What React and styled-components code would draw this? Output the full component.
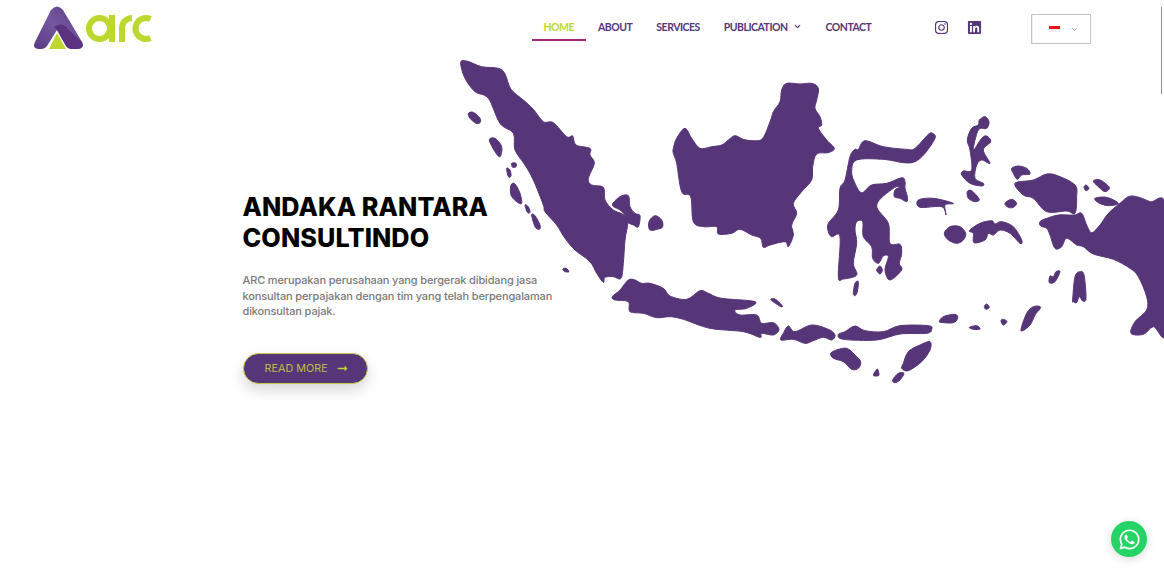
import React from "react";
import styled, { createGlobalStyle } from "styled-components";
import { FaInstagram, FaLinkedin, FaWhatsapp, FaLongArrowAltRight } from "react-icons/fa";
import { ChevronDown } from "lucide-react";

const PURPLE = "#563678";
const LIME = "#bdd72e";

// map outlines, traced from the reference at 3x
const WEST = [
  [[32,38],[50,33],[95,50],[145,55],[165,72],[183,118],[220,150],[250,178],[280,215],[310,218],[350,260],[368,258],[378,285],[420,295],[420,315],[433,340],[415,385],[425,405],[460,412],[465,450],[490,480],[522,495],[533,520],[525,570],[520,640],[513,685],[490,680],[465,682],[460,697],[440,670],[420,635],[375,600],[345,565],[320,525],[285,485],[280,465],[250,390],[225,345],[195,300],[190,250],[150,220],[115,145],[75,125],[45,85]],
  [[55,190],[70,187],[90,205],[90,218],[78,220],[60,205]],
  [[118,270],[135,265],[155,290],[150,320],[135,305]],
  [[185,340],[198,340],[198,350],[188,352]],
  [[170,355],[180,360],[183,378],[175,380]],
  [[183,405],[195,402],[210,430],[215,460],[200,455],[183,435]],
  [[225,465],[235,470],[240,487],[232,487]],
  [[245,495],[255,497],[270,525],[268,538],[255,530]],
  [[338,657],[348,655],[357,665],[345,665]],
  [[487,465],[510,440],[535,437],[540,470],[555,490],[570,497],[565,530],[550,525],[530,515],[525,495],[510,480]],
  [[597,515],[615,497],[635,510],[638,530],[625,537],[600,540]],
  [[487,740],[510,720],[535,690],[555,690],[575,700],[600,700],[640,715],[660,738],[710,748],[750,722],[775,730],[815,745],[915,755],[890,775],[855,780],[870,795],[920,795],[935,820],[970,818],[987,838],[970,855],[935,850],[930,862],[880,845],[780,835],[700,808],[660,800],[620,803],[580,790],[540,785],[535,755],[495,750]],
  [[963,750],[975,747],[995,765],[993,770]],
  [[670,295],[680,265],[705,235],[725,265],[750,295],[785,290],[815,285],[835,270],[855,257],[880,268],[910,272],[938,265],[962,210],[970,185],[990,155],[995,120],[1010,100],[1050,102],[1085,100],[1105,115],[1100,150],[1095,175],[1110,200],[1115,225],[1105,235],[1130,270],[1153,295],[1135,308],[1100,312],[1088,350],[1085,390],[1055,425],[1030,460],[1040,490],[1025,525],[1030,555],[1015,590],[1005,575],[960,585],[940,592],[932,565],[905,555],[870,538],[845,550],[805,552],[800,530],[760,530],[730,515],[722,440],[695,425],[680,340],[670,310]],
];

const EAST = [
  [[-57,720],[-50,700],[-35,678],[-15,695],[35,675],[85,688],[105,705],[95,720],[70,712],[40,722],[15,730],[-20,718]],
  [[115,703],[135,695],[165,678],[195,692],[250,695],[300,677],[385,677],[395,688],[380,700],[300,702],[230,720],[130,718]],
  [[92,760],[110,750],[140,745],[165,765],[182,785],[175,805],[155,808],[130,785],[100,775]],
  [[310,790],[325,755],[360,735],[390,725],[390,750],[365,785],[325,812],[305,805]],
  [[278,840],[295,820],[312,820],[300,840],[285,848]],
  [[220,825],[232,807],[237,825],[228,828]],
  [[418,665],[430,650],[465,643],[473,655],[460,668],[430,668]],
  [[508,682],[530,677],[540,687],[520,688]],
  [[553,620],[560,612],[568,622],[558,628]],
  [[603,662],[610,658],[621,665],[610,675]],
  [[663,692],[680,640],[700,620],[722,622],[705,645],[690,675]],
  [[433,400],[450,380],[480,380],[497,400],[490,420],[470,430],[445,420]],
  [[508,392],[540,370],[575,362],[585,372],[605,365],[640,380],[665,420],[660,430],[630,400],[600,390],[580,405],[565,400],[555,420],[522,428],[520,400]],
  [[85,370],[115,330],[120,265],[135,240],[150,170],[165,148],[175,148],[195,122],[250,140],[320,148],[345,145],[385,103],[398,100],[405,115],[375,160],[345,185],[310,188],[250,178],[170,180],[155,215],[165,250],[185,278],[215,255],[260,250],[305,233],[315,245],[315,265],[322,290],[320,305],[300,295],[283,290],[285,270],[300,262],[280,265],[230,315],[265,370],[270,430],[300,433],[305,460],[298,490],[305,510],[270,540],[255,510],[265,470],[250,468],[235,490],[218,475],[215,440],[190,410],[188,365],[170,365],[165,390],[170,430],[160,490],[170,525],[130,537],[115,530],[120,410],[95,410],[85,395]],
  [[160,580],[165,550],[175,545],[172,575],[165,587]],
  [[230,510],[240,498],[247,510],[240,522]],
  [[355,300],[400,295],[460,310],[435,315],[438,345],[425,320],[360,322]],
  [[502,120],[515,85],[535,75],[538,60],[555,50],[567,65],[560,85],[535,90],[520,150],[545,115],[560,108],[572,125],[550,150],[570,190],[545,180],[530,195],[525,235],[550,250],[545,258],[510,250],[485,225],[490,213],[515,210],[510,150]],
  [[502,275],[515,272],[538,298],[525,305],[505,295]],
  [[615,310],[635,298],[650,310],[640,322],[625,322]],
  [[635,205],[655,198],[680,205],[690,222],[665,225],[652,238],[640,220]],
  [[645,250],[700,240],[740,222],[775,228],[825,255],[830,290],[825,340],[800,333],[740,335],[700,295],[670,285]],
  [[720,365],[740,355],[775,345],[805,345],[825,345],[845,340],[860,375],[875,398],[900,375],[925,340],[960,310],[985,290],[1010,290],[1050,305],[1100,327],[1100,690],[1060,680],[1030,703],[993,700],[1005,665],[1040,630],[1040,590],[1015,530],[990,505],[940,478],[880,462],[850,440],[830,435],[800,415],[785,440],[765,445],[750,405],[740,385],[722,378]],
  [[880,243],[900,240],[928,262],[915,275],[895,260]],
  [[885,295],[920,292],[955,310],[925,317],[895,308]],
  [[852,262],[858,255],[867,265],[858,272]],
  [[750,528],[760,530],[768,515],[780,515],[765,545],[748,548]],
  [[818,600],[825,530],[840,515],[852,525],[858,595],[848,603],[838,590],[830,608],[820,605]],
];

// closed catmull-rom through the traced points
const smooth = (pts) => {
  const n = pts.length;
  let d = `M${pts[0][0]} ${pts[0][1]}`;
  for (let i = 0; i < n; i++) {
    const [p0, p1, p2, p3] = [pts[(i - 1 + n) % n], pts[i], pts[(i + 1) % n], pts[(i + 2) % n]];
    const c1 = [p1[0] + (p2[0] - p0[0]) / 6, p1[1] + (p2[1] - p0[1]) / 6];
    const c2 = [p2[0] - (p3[0] - p1[0]) / 6, p2[1] - (p3[1] - p1[1]) / 6];
    d += `C${c1[0]} ${c1[1]} ${c2[0]} ${c2[1]} ${p2[0]} ${p2[1]}`;
  }
  return d + "Z";
};

const GlobalStyle = createGlobalStyle`
  html, body {
    margin: 0;
    height: 100%;
    background: #fff;
    overflow: hidden;
  }
`;

const Page = styled.div`
  position: relative;
  width: 1164px;
  height: 572px;
  overflow: hidden;
  font-family: "Inter", "Liberation Sans", sans-serif;
`;

const Header = styled.header`
  position: relative;
  z-index: 1;
  display: flex;
  align-items: flex-start;
  height: 55px;
`;

const LogoMark = styled.svg`
  flex: none;
  display: block;
  width: 160px;
  height: 55px;
`;

const Nav = styled.nav`
  display: flex;
  flex: none;
  width: 353px;
  margin: 14px 0 0 371.5px;
`;

const NavItem = styled.a`
  display: flex;
  align-items: center;
  gap: 5px;
  height: 27px;
  padding: 0 12px;
  box-sizing: border-box;
  border-bottom: 2px solid ${(p) => (p.$active ? "#a3237f" : "transparent")};
  font-family: "Lato", sans-serif;
  font-size: 10.5px;
  font-weight: 700;
  letter-spacing: -0.5px;
  white-space: nowrap;
  color: ${(p) => (p.$active ? LIME : PURPLE)};
`;

const Socials = styled.div`
  display: flex;
  flex: none;
  gap: 18px;
  margin: 20px 0 0 49px;
  color: ${PURPLE};
  font-size: 15px;
  line-height: 0;
`;

const LangSelect = styled.div`
  display: flex;
  flex: none;
  align-items: center;
  justify-content: space-between;
  box-sizing: border-box;
  width: 60px;
  height: 30px;
  margin: 14px 0 0 49px;
  padding: 0 11px 0 17px;
  border: 1px solid #c4c4c4;
  box-shadow: inset 1px 0 0 #eee;
  color: #888;
`;

const Flag = styled.span`
  display: block;
  width: 11px;
  height: 6px;
  background: linear-gradient(#f30f1c 50%, #eee 50%);
`;

const Hero = styled.main`
  display: grid;
`;

const MapArt = styled.svg`
  grid-area: 1 / 1;
  justify-self: end;
  display: block;
  width: 714px;
  height: 345px;
  fill: ${PURPLE};
  stroke: ${PURPLE};
  stroke-width: 3;
  stroke-linejoin: round;
`;

const Copy = styled.section`
  grid-area: 1 / 1;
  position: relative;
  width: 320px;
  margin-left: 242.5px;
  padding-top: 137px;
`;

const Title = styled.h1`
  margin: 0 0 19px;
  font-family: "Inter", sans-serif;
  font-size: 25.2px;
  font-weight: 800;
  line-height: 31px;
  letter-spacing: 0.1px;
  color: #000;
`;

const Lead = styled.p`
  margin: 0 0 33px;
  font-family: "Inter", sans-serif;
  font-size: 11px;
  font-weight: 500;
  line-height: 15.5px;
  letter-spacing: -0.14px;
  color: #7a7a7a;
`;

const ReadMore = styled.a`
  display: inline-flex;
  align-items: center;
  gap: 9px;
  box-sizing: border-box;
  width: 125px;
  height: 31px;
  padding-left: 21px;
  border: 1px solid #c3c94a;
  border-radius: 16px;
  background: ${PURPLE};
  box-shadow: 0 6px 14px rgba(0, 0, 0, 0.16);
  font-size: 10.8px;
  font-weight: 400;
  color: #b9bd4c;
`;

const ChatButton = styled.a`
  position: absolute;
  right: 17px;
  bottom: 15px;
  display: flex;
  align-items: center;
  justify-content: center;
  width: 36px;
  height: 36px;
  border-radius: 50%;
  background: #25d366;
  box-shadow: 0 2px 10px rgba(0, 0, 0, 0.15);
  color: #fff;
  font-size: 23px;
`;

const ScrollLine = styled.div`
  position: absolute;
  top: 7px;
  right: 2px;
  width: 1px;
  height: 87px;
  background: #8f8f8f;
`;

const Logo = () => (
  <LogoMark viewBox="0 0 160 55" role="img" aria-label="arc">
    <defs>
      <linearGradient id="legA" x1="0" y1="1" x2="1" y2="0">
        <stop offset="0" stopColor="#5b3a85" />
        <stop offset="0.5" stopColor="#75579f" />
        <stop offset="1" stopColor="#5a3a82" />
      </linearGradient>
    </defs>
    <path
      d="M51 10Q57 3 63 10L82 42Q85 49 77 49L71 49Q68 49 66 46L57 30L47 46Q45 49 42 49L38 49Q32 48 35 42Z"
      fill="url(#legA)"
    />
    <path d="M54 27Q62 21 68 29L82 42Q85 49 77 49L71 49Q68 49 66 46L57 30Z" fill="#5b3280" />
    <path d="M57 33L66 49L49 49Z" fill={LIME} />
    <g fill="none" stroke={LIME} strokeWidth="6">
      <circle cx="99.5" cy="28.5" r="10.5" />
      <line x1="112" y1="15" x2="112" y2="42" />
      <line x1="122" y1="28" x2="122" y2="42" />
      <circle cx="132" cy="28" r="10" pathLength="100" strokeDasharray="25 75" transform="rotate(180 132 28)" />
      <circle cx="146" cy="28.5" r="10.5" pathLength="100" strokeDasharray="64 36" transform="rotate(65 146 28.5)" />
    </g>
  </LogoMark>
);

const IndonesiaMap = () => (
  <MapArt viewBox="0 15 2142 1035" aria-hidden="true">
    {WEST.map((pts, i) => (
      <path key={i} d={smooth(pts)} />
    ))}
    <g transform="translate(1050 150)">
      {EAST.map((pts, i) => (
        <path key={i} d={smooth(pts)} />
      ))}
    </g>
  </MapArt>
);

export default function App() {
  return (
    <Page>
      <GlobalStyle />
      <Header>
        <Logo />
        <Nav>
          <NavItem $active>HOME</NavItem>
          <NavItem>ABOUT</NavItem>
          <NavItem>SERVICES</NavItem>
          <NavItem>
            PUBLICATION <ChevronDown size={9} strokeWidth={3} />
          </NavItem>
          <NavItem>CONTACT</NavItem>
        </Nav>
        <Socials>
          <FaInstagram />
          <FaLinkedin />
        </Socials>
        <LangSelect>
          <Flag />
          <ChevronDown size={9} />
        </LangSelect>
      </Header>
      <Hero>
        <IndonesiaMap />
        <Copy>
          <Title>
            ANDAKA RANTARA
            <br />
            CONSULTINDO
          </Title>
          <Lead>
            ARC merupakan perusahaan yang bergerak dibidang jasa konsultan perpajakan dengan tim yang telah
            berpengalaman dikonsultan pajak.
          </Lead>
          <ReadMore>
            READ MORE <FaLongArrowAltRight color={LIME} size={11} />
          </ReadMore>
        </Copy>
      </Hero>
      <ScrollLine />
      <ChatButton>
        <FaWhatsapp />
      </ChatButton>
    </Page>
  );
}
